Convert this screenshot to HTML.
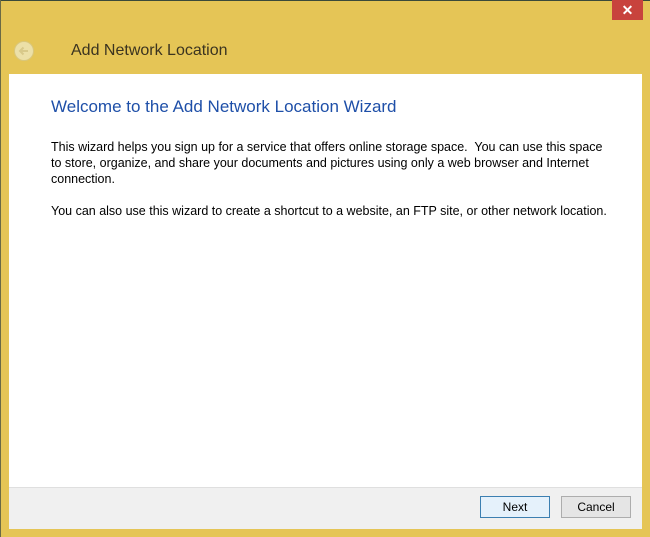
<!DOCTYPE html>
<html><head><style>
body{margin:0;width:650px;height:537px;background:#e5c556;position:relative;overflow:hidden;font-family:"Liberation Sans",sans-serif}
.top{position:absolute;left:0;top:0;width:650px;height:1px;background:#3a4a3a}
.left{position:absolute;left:0;top:0;width:1px;height:537px;background:#6b6a45}
.close{position:absolute;left:612px;top:0;width:31px;height:20px;background:#c8433d;color:#fff;font-size:14px;text-align:center;line-height:20px;font-weight:bold}
.back{position:absolute;left:14px;top:41px;width:20px;height:20px;border-radius:50%;background:#ece0a8;border:1px solid #d9c77c;box-sizing:border-box}
.title{position:absolute;left:71px;top:42px;font-size:16px;color:#3b3420}
.main{position:absolute;left:9px;top:74px;width:633px;height:413px;background:#fff}
.foot{position:absolute;left:9px;top:487px;width:633px;height:41px;background:#f0f0f0;border-top:1px solid #dfdfdf}
h1{position:absolute;left:51px;top:97px;margin:0;font-weight:normal;font-size:17px;color:#1e4fa8}
p{position:absolute;left:51px;margin:0;font-size:12.5px;line-height:16px;color:#000;width:560px}
.btn{position:absolute;top:496px;width:70px;height:22px;box-sizing:border-box;border:1px solid #adadad;background:#e5e5e5;font-size:12px;text-align:center;line-height:20px}
</style></head><body>
<div class="top"></div><div class="left"></div>
<div class="close">✕</div>
<div class="back"><svg width="18" height="18" viewBox="0 0 18 18"><path d="M13 9H5M8.5 5.5L5 9l3.5 3.5" stroke="#d8c98a" stroke-width="2" fill="none"/></svg></div>
<div class="title">Add Network Location</div>
<div class="main"></div>
<div class="foot"></div>
<h1>Welcome to the Add Network Location Wizard</h1>
<p style="top:139px">This wizard helps you sign up for a service that offers online storage space.&nbsp; You can use this space to store, organize, and share your documents and pictures using only a web browser and Internet connection.</p>
<p style="top:203px;width:590px">You can also use this wizard to create a shortcut to a website, an FTP site, or other network location.</p>
<div class="btn" style="left:480px;border-color:#3c7fb1;background:#e5f1fb">Next</div>
<div class="btn" style="left:561px">Cancel</div>
</body></html>
